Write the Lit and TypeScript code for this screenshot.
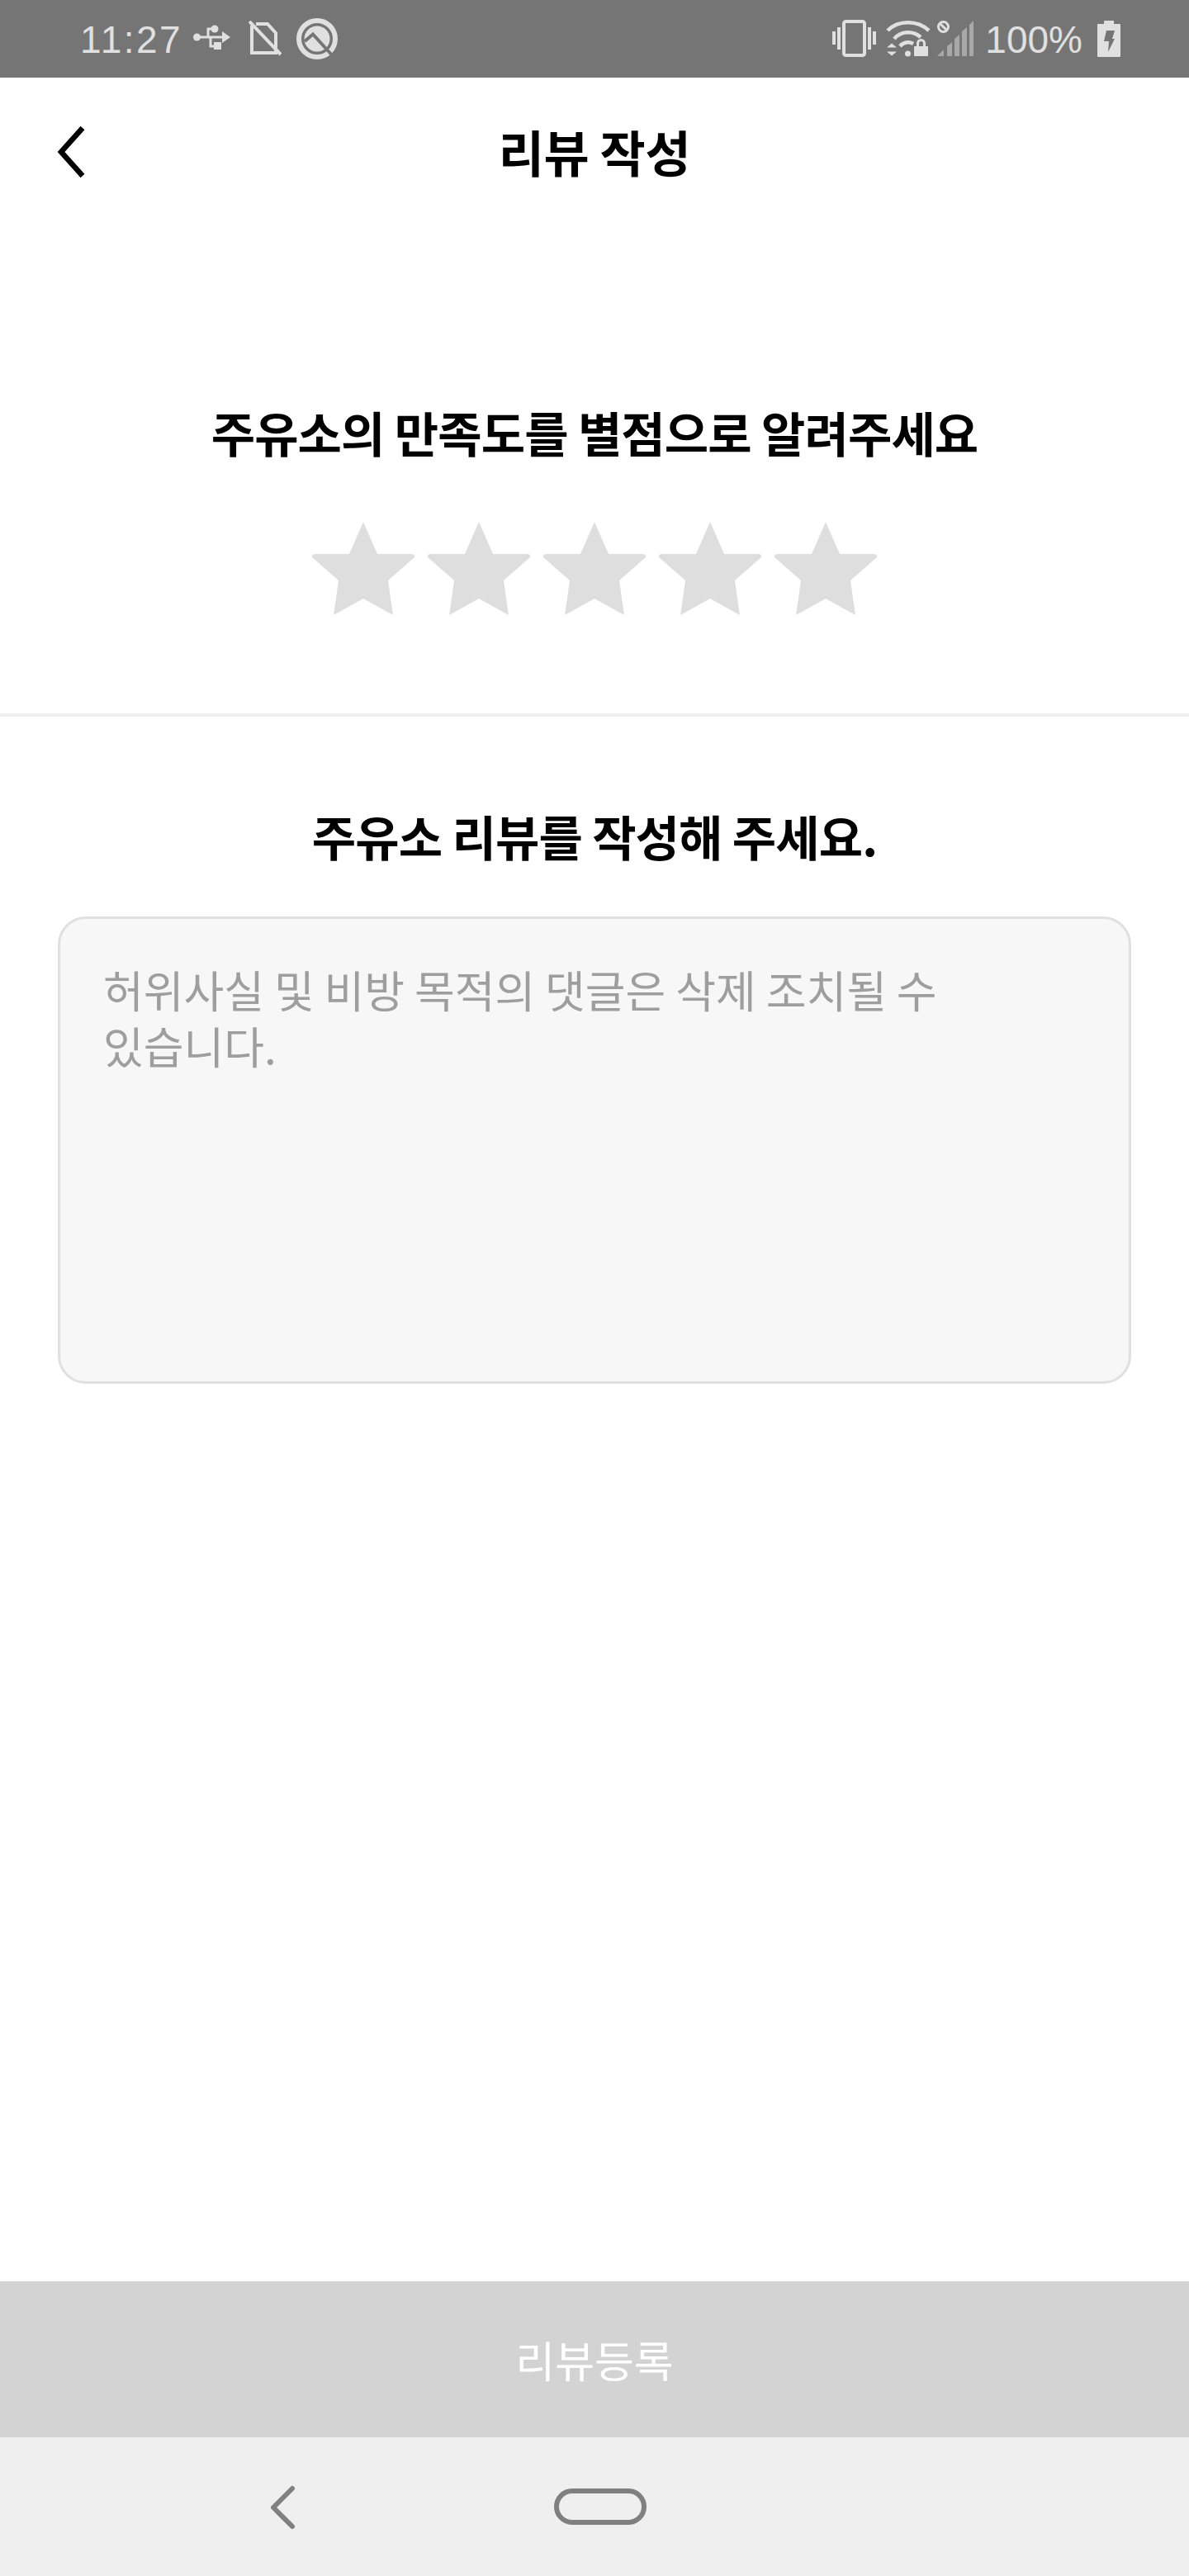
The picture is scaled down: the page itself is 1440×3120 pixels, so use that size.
import { LitElement, html, css, svg } from 'lit';
import { customElement } from 'lit/decorators.js';

const starPath = 'M62 0 L79 39 L120 39 Q125 39 124 43 L92 71 L98 113 L62 93 L26 113 L32 71 L0 43 Q-1 39 4 39 L45 39 Z';

const usbIcon = svg`<svg class="icon" width="48" height="34" viewBox="0 0 48 34">
  <circle cx="4.500" cy="15" r="4.500" fill="#e0e0e0"/>
  <path d="M4 15H36" stroke="#e0e0e0" stroke-width="3" fill="none"/>
  <path d="M35 8L45 15L35 22Z" fill="#e0e0e0"/>
  <circle cx="26" cy="5" r="4.500" fill="#e0e0e0"/>
  <path d="M18 15V5H26M21 15V26H27" stroke="#e0e0e0" stroke-width="3" fill="none"/>
  <rect x="25" y="21" width="9" height="9" fill="#e0e0e0"/>
</svg>`;

const simOffIcon = svg`<svg class="icon" width="42" height="44" viewBox="0 0 42 44">
  <path d="M4 6V39H33V15L23 4H9" stroke="#e0e0e0" stroke-width="4" fill="none"/>
  <path d="M1 1L39 41" stroke="#e0e0e0" stroke-width="4" fill="none"/>
</svg>`;

const androidQIcon = svg`<svg class="icon" width="50" height="50" viewBox="0 0 50 50">
  <circle cx="25" cy="25" r="22" stroke="#e0e0e0" stroke-width="6" fill="none"/>
  <circle cx="25" cy="25" r="15.500" fill="#e0e0e0"/>
  <path d="M10 28L20 19.500L46 48" stroke="#757575" stroke-width="4" fill="none"/>
</svg>`;

const vibrateIcon = svg`<svg class="icon" width="54" height="46" viewBox="0 0 54 46">
  <rect x="14" y="2" width="25" height="41" rx="2.500" stroke="#e0e0e0" stroke-width="4" fill="none"/>
  <rect x="0" y="14" width="4" height="16" fill="#e0e0e0"/>
  <rect x="6" y="9" width="4" height="27" fill="#e0e0e0"/>
  <rect x="43" y="9" width="4" height="27" fill="#e0e0e0"/>
  <rect x="49" y="14" width="4" height="16" fill="#e0e0e0"/>
</svg>`;

const wifiIcon = svg`<svg class="icon" width="54" height="44" viewBox="0 0 54 44">
  <path d="M2 12C15 -1 38 -1 52 12" stroke="#e0e0e0" stroke-width="4.500" fill="none"/>
  <path d="M10 22C18 12 33 12 42 20" stroke="#e0e0e0" stroke-width="4.500" fill="none"/>
  <path d="M17 31C21 26 28 25 33 28" stroke="#e0e0e0" stroke-width="4.500" fill="none"/>
  <circle cx="26.500" cy="40" r="3.500" fill="#e0e0e0"/>
  <path d="M1 32.500L7 27.500L13 32.500Z M1 37.500H13L7 42.500Z" fill="#e0e0e0"/>
  <rect x="34" y="31" width="17" height="12" rx="1" fill="#e0e0e0"/>
  <path d="M38.500 31V27.500A4 4 0 0 1 46.500 27.500V31" stroke="#e0e0e0" stroke-width="3" fill="none"/>
</svg>`;

const signalIcon = svg`<svg class="icon" width="46" height="44" viewBox="0 0 46 44">
  <circle cx="7.500" cy="7.500" r="6" fill="none" stroke="#e0e0e0" stroke-width="3"/>
  <path d="M3 3L12 12" stroke="#e0e0e0" stroke-width="3"/>
  <g fill="#a8a8a8">
    <path d="M0 43L8 35V43Z"/>
    <path d="M12 31L18 26V43H12Z"/>
    <path d="M21 22L27 17V43H21Z"/>
    <path d="M30 13L36 8V43H30Z"/>
    <path d="M39 5L44 0V43H39Z"/>
  </g>
</svg>`;

const batteryIcon = svg`<svg class="icon" width="28" height="44" viewBox="0 0 28 44">
  <path fill-rule="evenodd" fill="#e0e0e0" d="M8 0H20V4H27Q28 4 28 5V43Q28 44 27 44H1Q0 44 0 43V5Q0 4 1 4H8Z M11 12H21L18 22H21L13 38L14 25H8Z"/>
</svg>`;

@customElement('app-root')
export class AppRoot extends LitElement {
  static styles = css`
    :host {
      display: flex;
      flex-direction: column;
      width: 1440px;
      height: 3120px;
      background: #fff;
      font-family: 'Noto Sans CJK KR', 'Noto Sans', sans-serif;
      color: #000;
    }

    .status-bar {
      flex: none;
      height: 94px;
      box-sizing: border-box;
      padding: 0 83px 0 97px;
      display: flex;
      align-items: center;
      background: #757575;
      color: #e0e0e0;
      font-family: 'Liberation Sans', sans-serif;
      font-size: 46px;
    }

    .status-group {
      display: flex;
      align-items: center;
    }

    .status-right {
      margin-left: auto;
    }

    .icon {
      display: block;
      flex: none;
    }

    .time {
      letter-spacing: 2.500px;
      margin-right: 13px;
      padding-top: 2px;
    }

    .battery-label {
      margin: 0 18px 0 12px;
      padding-top: 2px;
    }

    .sim-slot {
      margin: 0 16px 0 19px;
    }

    .vibrate-slot {
      margin-right: 11px;
    }

    .wifi-slot {
      margin-right: 8px;
    }

    .top-bar {
      flex: none;
      height: 186px;
      box-sizing: border-box;
      padding-bottom: 8px;
      position: relative;
      display: flex;
      align-items: center;
      justify-content: center;
    }

    .back {
      position: absolute;
      left: 67px;
      top: 57px;
    }

    .top-title {
      font-size: 60px;
      font-weight: 700;
      letter-spacing: -0.4px;
      line-height: 1;
    }

    .rating {
      flex: none;
      height: 588px;
      box-sizing: border-box;
      padding-top: 201px;
      border-bottom: 4px solid #eeeeee;
      text-align: center;
    }

    .heading {
      margin: 0;
      font-size: 58px;
      font-weight: 700;
      line-height: 84px;
      letter-spacing: -0.9px;
    }

    .stars {
      display: flex;
      justify-content: center;
      gap: 16px;
      margin-top: 67px;
    }

    .review {
      flex: 1;
      padding: 102px 70px 0;
      text-align: center;
    }

    .note {
      margin-top: 56px;
      height: 566px;
      box-sizing: border-box;
      border: 3px solid #e0e0e0;
      border-radius: 34px;
      background: #f7f7f7;
      padding: 51px 52px;
      text-align: left;
      color: #9e9e9e;
      font-size: 53px;
      line-height: 68px;
      font-weight: 400;
      word-break: keep-all;
    }

    .submit {
      flex: none;
      height: 189px;
      display: flex;
      align-items: center;
      justify-content: center;
      background: #d3d3d3;
      color: #fff;
      font-size: 52px;
      font-weight: 400;
    }

    .nav-bar {
      flex: none;
      height: 168px;
      box-sizing: border-box;
      padding: 58px 0 0 324px;
      display: flex;
      align-items: flex-start;
      background: #efefef;
    }

    .home-slot {
      margin: 4px 0 0 311px;
    }
  `;

  render() {
    return html`
      <div class="status-bar">
        <div class="status-group">
          <span class="time">11:27</span>
          ${usbIcon}
          <span class="sim-slot">${simOffIcon}</span>
          ${androidQIcon}
        </div>
        <div class="status-group status-right">
          <span class="vibrate-slot">${vibrateIcon}</span>
          <span class="wifi-slot">${wifiIcon}</span>
          ${signalIcon}
          <span class="battery-label">100%</span>
          ${batteryIcon}
        </div>
      </div>

      <div class="top-bar">
        <svg class="icon back" width="40" height="66" viewBox="0 0 40 66">
          <path d="M33 4L7 33L33 62" stroke="#000" stroke-width="6.500" fill="none"/>
        </svg>
        <span class="top-title">리뷰 작성</span>
      </div>

      <section class="rating">
        <h2 class="heading">주유소의 만족도를 별점으로 알려주세요</h2>
        <div class="stars">
          ${[0, 1, 2, 3, 4].map(
            () => html`<svg class="icon" width="124" height="113" viewBox="0 0 124 113"><path d="${starPath}" fill="#dedede"/></svg>`,
          )}
        </div>
      </section>

      <section class="review">
        <h2 class="heading">주유소 리뷰를 작성해 주세요.</h2>
        <div class="note">허위사실 및 비방 목적의 댓글은 삭제 조치될 수 있습니다.</div>
      </section>

      <div class="submit">리뷰등록</div>

      <div class="nav-bar">
        <svg class="icon" width="36" height="54" viewBox="0 0 36 54">
          <path d="M30 4L7 27L30 50" stroke="#808080" stroke-width="6" stroke-linecap="round" stroke-linejoin="round" fill="none"/>
        </svg>
        <svg class="icon home-slot" width="112" height="44" viewBox="0 0 112 44">
          <rect x="3" y="3" width="106" height="38" rx="19" stroke="#808080" stroke-width="6" fill="none"/>
        </svg>
      </div>
    `;
  }
}
